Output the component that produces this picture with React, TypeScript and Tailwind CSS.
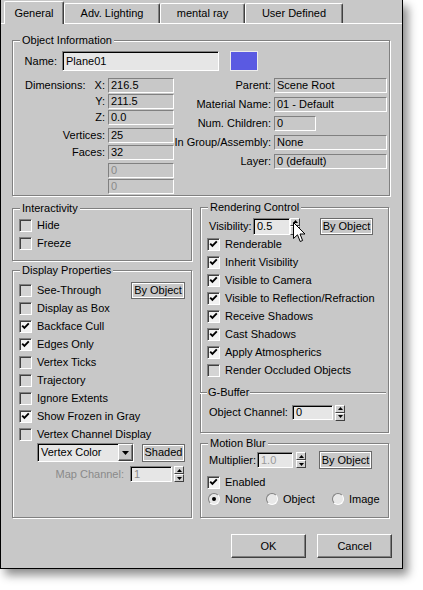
import React from 'react'

// bordes estilo Windows clásico
const sunken = 'border border-t-[#808080] border-l-[#808080] border-r-white border-b-white'
const deep = `${sunken} shadow-[inset_1px_1px_0_#000] bg-[#e6e6e6]`
const raised = 'border border-t-white border-l-white border-r-[#404040] border-b-[#404040] shadow-[inset_-1px_-1px_0_#808080] bg-[#c8c8c8]'

function Group({ title, className, children }: { title: string; className?: string; children?: React.ReactNode }) {
  return (
    <div className={`relative border border-[#808080] shadow-[inset_1px_1px_0_#fff,1px_1px_0_#fff] ${className ?? ''}`}>
      <span className="absolute -top-[7px] left-[7px] bg-[#c8c8c8] px-[2px] leading-[13px]">{title}</span>
      {children}
    </div>
  )
}

function Field({ className, children, gray }: { className?: string; children?: React.ReactNode; gray?: boolean }) {
  return (
    <div className={`flex h-[15px] items-center bg-[#c8c8c8] pl-[2px] ${sunken} ${gray ? 'text-[#8a8a8a]' : ''} ${className ?? ''}`}>
      {children}
    </div>
  )
}

function Check({ on, label }: { on?: boolean; label: string }) {
  return (
    <div className="flex h-[18px] items-center gap-[5px]">
      <div
        className={`flex h-[13px] w-[13px] items-center justify-center ${sunken} shadow-[inset_1px_1px_0_#404040] ${
          on ? 'bg-[#f2f2f2]' : 'bg-[#d4d4d4]'
        }`}
      >
        {on && (
          <svg width="9" height="9" viewBox="0 0 9 9">
            <path d="M1.2 3.6 L3.4 5.9 L7.8 1.4" stroke="#000" strokeWidth="1.9" fill="none" />
          </svg>
        )}
      </div>
      <span className="whitespace-nowrap">{label}</span>
    </div>
  )
}

function Spin({ h = 16 }: { h?: number }) {
  const half = (up: boolean) => (
    <div className={`flex flex-1 items-center justify-center ${raised} shadow-none bg-[#d0d0d0]`}>
      <svg width="5" height="3" viewBox="0 0 5 3">
        <path d={up ? 'M2.5 0 L5 3 L0 3Z' : 'M0 0 L5 0 L2.5 3Z'} fill="#000" />
      </svg>
    </div>
  )
  return (
    <div className={`flex w-[10px] flex-col ${h === 17 ? 'h-[17px]' : 'h-[16px]'}`}>
      {half(true)}
      {half(false)}
    </div>
  )
}

function Btn({ className, children }: { className?: string; children: React.ReactNode }) {
  return (
    <div
      className={`flex items-center justify-center border border-[#6a6a6a] bg-[#c8c8c8] shadow-[inset_1px_1px_0_#fff,inset_-1px_-1px_0_#fff] ${className ?? ''}`}
    >
      {children}
    </div>
  )
}

function Radio({ on, label, className }: { on?: boolean; label: string; className?: string }) {
  return (
    <div className={`flex items-center gap-[5px] ${className ?? ''}`}>
      <div className={`flex h-[12px] w-[12px] items-center justify-center rounded-full ${sunken} bg-[#e8e8e8]`}>
        {on && <div className="h-[4px] w-[4px] rounded-full bg-black" />}
      </div>
      <span>{label}</span>
    </div>
  )
}

function Tab({ label, w, active }: { label: string; w: string; active?: boolean }) {
  return (
    <div
      className={`flex items-center justify-center rounded-t-[2px] border-t border-l border-r border-t-white border-l-white border-r-[#404040] bg-[#c8c8c8] shadow-[inset_-1px_0_0_#808080] ${w} ${
        active ? 'relative z-10 -mb-px h-[23px]' : 'h-[20px]'
      }`}
    >
      {label}
    </div>
  )
}

export default function App() {
  return (
    <div className="h-[590px] w-[423px] bg-white font-['Liberation_Sans',Arial,sans-serif] text-[11px] leading-[13px] text-black">
      <div className="relative flex h-[569px] w-[403px] flex-col border-b border-l border-r border-black bg-[#c8c8c8] shadow-[5px_6px_9px_rgba(0,0,0,0.45)]">
        {/* pestañas */}
        <div className="flex h-[24px] items-end border-b border-white pl-[3px]">
          <Tab label="General" w="w-[60px]" active />
          <Tab label="Adv. Lighting" w="w-[96px]" />
          <Tab label="mental ray" w="w-[85px]" />
          <Tab label="User Defined" w="w-[98px]" />
        </div>

        <div className="flex flex-1 flex-col pl-[11px] pr-[10px] pt-[16px]">
          {/* Object Information */}
          <Group title="Object Information" className="h-[156px] w-[378px]">
            <div className="mt-[10px] flex h-[20px] items-center">
              <span className="w-[44px] text-right">Name:</span>
              <div className={`${deep} ml-[5px] flex h-[20px] w-[157px] items-center pl-[3px]`}>Plane01</div>
              <div className="ml-[11px] h-[20px] w-[28px] border border-[#ececec] bg-[#5a5ae2]" />
            </div>

            <div className="mt-[6px] flex">
              <div className="flex w-[161px] flex-col">
                <div className="flex h-[16px] items-center">
                  <div className="flex w-[92px] justify-between pl-[12px]">
                    <span>Dimensions:</span>
                    <span>X:</span>
                  </div>
                  <Field className="ml-[3px] w-[66px]">216.5</Field>
                </div>
                {[
                  ['Y:', '211.5', ''],
                  ['Z:', '0.0', ''],
                  ['Vertices:', '25', 'mt-[2px]'],
                  ['Faces:', '32', 'mt-[1px]'],
                  ['', '0', 'mt-[2px]'],
                  ['', '0', ''],
                ].map(([l, v, m], i) => (
                  <div key={i} className={`flex h-[16px] items-center ${m}`}>
                    <span className="w-[92px] text-right">{l}</span>
                    <Field className="ml-[3px] w-[66px]" gray={l === ''}>
                      {v}
                    </Field>
                  </div>
                ))}
              </div>

              <div className="flex flex-1 flex-col gap-[4px] pr-[2px] pt-[1px]">
                {[
                  ['Parent:', 'Scene Root'],
                  ['Material Name:', '01 - Default'],
                  ['Num. Children:', '0'],
                  ['In Group/Assembly:', 'None'],
                  ['Layer:', '0 (default)'],
                ].map(([l, v]) => (
                  <div key={l} className="flex h-[15px] items-center">
                    <span className="flex-1 whitespace-nowrap text-right">{l}</span>
                    <div className="ml-[3px] w-[113px]">
                      <Field className={l === 'Num. Children:' ? 'w-[42px]' : 'w-[113px]'}>{v}</Field>
                    </div>
                  </div>
                ))}
              </div>
            </div>
          </Group>

          <div className="mt-[11px] flex items-start gap-[8px]">
            {/* columna izquierda */}
            <div className="mt-[1px] flex w-[180px] flex-col">
              <Group title="Interactivity" className="h-[53px]">
                <div className="flex flex-col pl-[6px] pt-[7px]">
                  <Check label="Hide" />
                  <Check label="Freeze" />
                </div>
              </Group>

              <Group title="Display Properties" className="mt-[9px] h-[248px]">
                <div className="flex flex-col pt-[10px]">
                  <div className="flex items-center justify-between pl-[6px] pr-[6px]">
                    <Check label="See-Through" />
                    <Btn className="h-[17px] w-[54px]">By Object</Btn>
                  </div>
                  <div className="flex flex-col pl-[6px]">
                    <Check label="Display as Box" />
                    <Check on label="Backface Cull" />
                    <Check on label="Edges Only" />
                    <Check label="Vertex Ticks" />
                    <Check label="Trajectory" />
                    <Check label="Ignore Extents" />
                    <Check on label="Show Frozen in Gray" />
                    <Check label="Vertex Channel Display" />
                  </div>
                  <div className="flex h-[19px] items-center pl-[24px]">
                    <div className={`${deep} flex h-[19px] w-[97px] items-center`}>
                      <span className="flex-1 pl-[3px]">Vertex Color</span>
                      <div className={`${raised} flex h-full w-[15px] items-center justify-center`}>
                        <svg width="7" height="4" viewBox="0 0 7 4">
                          <path d="M0 0 L7 0 L3.5 4Z" fill="#000" />
                        </svg>
                      </div>
                    </div>
                    <Btn className="ml-[8px] h-[18px] w-[43px]">Shaded</Btn>
                  </div>
                  <div className="mt-[4px] flex h-[16px] items-center">
                    <span className="w-[111px] text-right text-[#8a8a8a]">Map Channel:</span>
                    <div className={`${deep} ml-[6px] flex h-[16px] w-[42px] items-center pl-[3px] text-[#8a8a8a]`}>1</div>
                    <div className="ml-[2px]">
                      <Spin />
                    </div>
                  </div>
                </div>
              </Group>
            </div>

            {/* columna derecha */}
            <div className="flex w-[189px] flex-col">
              <Group title="Rendering Control" className="h-[226px]">
                <div className="flex flex-col pt-[9px]">
                  <div className="flex h-[18px] items-center pl-[8px]">
                    <span className="w-[44px]">Visibility:</span>
                    <div className={`${deep} flex h-[17px] w-[37px] items-center pl-[3px]`}>0.5</div>
                    <Spin h={17} />
                    <Btn className="ml-[20px] h-[17px] w-[53px]">By Object</Btn>
                  </div>
                  <div className="flex flex-col pl-[6px]">
                    <Check on label="Renderable" />
                    <Check on label="Inherit Visibility" />
                    <Check on label="Visible to Camera" />
                    <Check on label="Visible to Reflection/Refraction" />
                    <Check on label="Receive Shadows" />
                    <Check on label="Cast Shadows" />
                    <Check on label="Apply Atmospherics" />
                    <Check label="Render Occluded Objects" />
                  </div>
                  <div className="-ml-px mr-[2px] mt-[7px] flex h-[13px] items-center">
                    <div className="h-0 w-[7px] border-t border-[#808080] shadow-[0_1px_0_#fff]" />
                    <span className="px-[1px]">G-Buffer</span>
                    <div className="h-0 flex-1 border-t border-[#808080] shadow-[0_1px_0_#fff]" />
                  </div>
                  <div className="mt-[5px] flex h-[17px] items-center pl-[8px]">
                    <span className="w-[83px] whitespace-nowrap">Object Channel:</span>
                    <div className={`${deep} flex h-[15px] w-[41px] items-center pl-[3px]`}>0</div>
                    <div className="ml-[2px]">
                      <Spin />
                    </div>
                  </div>
                </div>
              </Group>

              <Group title="Motion Blur" className="mt-[10px] h-[75px]">
                <div className="flex flex-col pt-[7px]">
                  <div className="flex h-[18px] items-center pl-[8px]">
                    <span className="w-[48px]">Multiplier:</span>
                    <div className={`${deep} flex h-[16px] w-[36px] items-center pl-[3px] text-[#9a9a9a]`}>1.0</div>
                    <div className="ml-[3px]">
                      <Spin />
                    </div>
                    <Btn className="ml-[13px] h-[18px] w-[53px]">By Object</Btn>
                  </div>
                  <div className="mt-[4px] pl-[6px]">
                    <Check on label="Enabled" />
                  </div>
                  <div className="flex h-[16px] items-center pl-[7px]">
                    <Radio on label="None" className="w-[58px]" />
                    <Radio label="Object" className="w-[66px]" />
                    <Radio label="Image" />
                  </div>
                </div>
              </Group>
            </div>
          </div>

          {/* botones */}
          <div className="mt-[16px] flex justify-end gap-[11px]">
            <div className={`${raised} flex h-[24px] w-[75px] items-center justify-center`}>OK</div>
            <div className={`${raised} flex h-[24px] w-[75px] items-center justify-center`}>Cancel</div>
          </div>
        </div>

        {/* cursor del ratón */}
        <svg className="absolute left-[292px] top-[222px]" width="13" height="21" viewBox="0 0 13 21">
          <path d="M0.5 0.5 L0.5 16.5 L4.5 12.8 L7.2 19.5 L9.6 18.5 L7 12 L12 12 Z" fill="#fff" stroke="#000" strokeWidth="1" />
        </svg>
      </div>
    </div>
  )
}
